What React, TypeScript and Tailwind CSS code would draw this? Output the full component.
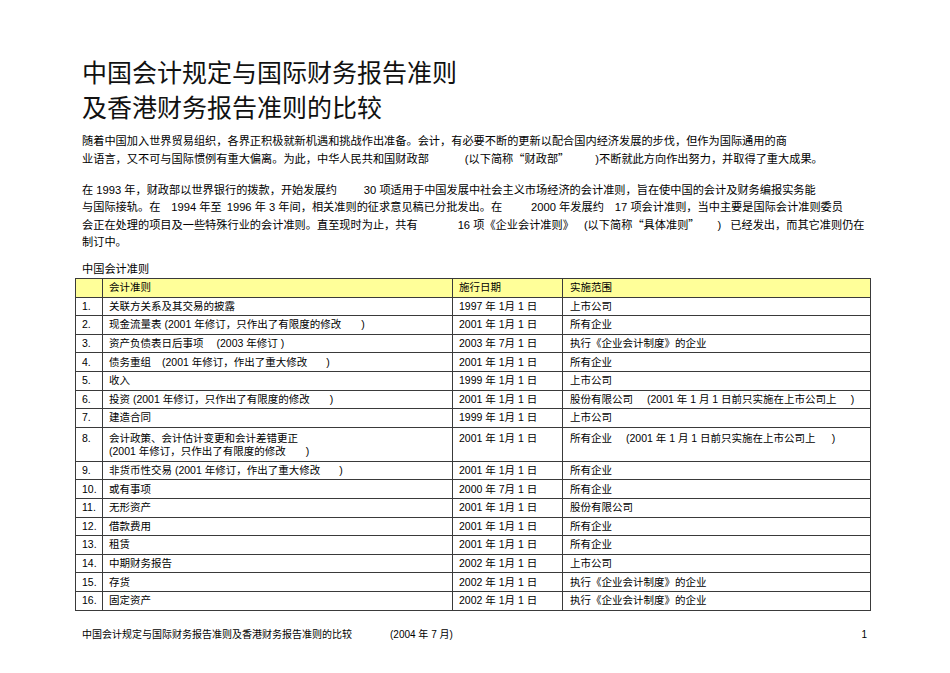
import React from "react";

const G = ({ w }: { w: string }) => <span className={`inline-block ${w}`} />;
const Q = ({ c }: { c: string }) => <span className="font-['Noto_Sans_CJK_SC',sans-serif]">{c}</span>;

type Row = { n: string; name: React.ReactNode; date: string; scope: React.ReactNode; tall?: boolean };

const rows: Row[] = [
  { n: "1.", name: "关联方关系及其交易的披露", date: "1997 年 1月 1 日", scope: "上市公司" },
  {
    n: "2.",
    name: (
      <>
        现金流量表 (2001 年修订，只作出了有限度的修改<span className="inline-block w-[20px]" />)
      </>
    ),
    date: "2001 年 1月 1 日",
    scope: "所有企业",
  },
  {
    n: "3.",
    name: (
      <>
        资产负债表日后事项<span className="inline-block w-[13px]" />(2003 年修订 )
      </>
    ),
    date: "2003 年 7月 1 日",
    scope: "执行《企业会计制度》的企业",
  },
  {
    n: "4.",
    name: (
      <>
        债务重组<span className="inline-block w-[11px]" />(2001 年修订，作出了重大修改<span className="inline-block w-[19px]" />)
      </>
    ),
    date: "2001 年 1月 1 日",
    scope: "所有企业",
  },
  { n: "5.", name: "收入", date: "1999 年 1月 1 日", scope: "上市公司" },
  {
    n: "6.",
    name: (
      <>
        投资 (2001 年修订，只作出了有限度的修改<span className="inline-block w-[20px]" />)
      </>
    ),
    date: "2001 年 1月 1 日",
    scope: (
      <>
        股份有限公司<span className="inline-block w-[14px]" />(2001 年 1 月 1 日前只实施在上市公司上<span className="inline-block w-[14px]" />)
      </>
    ),
  },
  { n: "7.", name: "建造合同", date: "1999 年 1月 1 日", scope: "上市公司" },
  {
    n: "8.",
    name: (
      <>
        会计政策、会计估计变更和会计差错更正
        <br />
        (2001 年修订，只作出了有限度的修改<span className="inline-block w-[20px]" />)
      </>
    ),
    date: "2001 年 1月 1 日",
    scope: (
      <>
        所有企业<span className="inline-block w-[14px]" />(2001 年 1 月 1 日前只实施在上市公司上<span className="inline-block w-[16px]" />)
      </>
    ),
    tall: true,
  },
  {
    n: "9.",
    name: (
      <>
        非货币性交易 (2001 年修订，作出了重大修改<span className="inline-block w-[19px]" />)
      </>
    ),
    date: "2001 年 1月 1 日",
    scope: "所有企业",
  },
  { n: "10.", name: "或有事项", date: "2000 年 7月 1 日", scope: "所有企业" },
  { n: "11.", name: "无形资产", date: "2001 年 1月 1 日", scope: "股份有限公司" },
  { n: "12.", name: "借款费用", date: "2001 年 1月 1 日", scope: "所有企业" },
  { n: "13.", name: "租赁", date: "2001 年 1月 1 日", scope: "所有企业" },
  { n: "14.", name: "中期财务报告", date: "2002 年 1月 1 日", scope: "上市公司" },
  { n: "15.", name: "存货", date: "2002 年 1月 1 日", scope: "执行《企业会计制度》的企业" },
  { n: "16.", name: "固定资产", date: "2002 年 1月 1 日", scope: "执行《企业会计制度》的企业" },
];

export default function App() {
  return (
    <div className="w-[950px] h-[673px] bg-white text-black font-['Liberation_Sans','Noto_Sans_CJK_SC',sans-serif] overflow-hidden">
      <div className="pt-[56px] pl-[82px]">
        <h1 className="text-[25px] leading-[35px] font-normal text-[#111]">
          中国会计规定与国际财务报告准则
          <br />
          及香港财务报告准则的比较
        </h1>
      </div>

      <div className="mt-[7px] pl-[82px] text-[11.2px] leading-[17px] whitespace-nowrap">
        <div>随着中国加入世界贸易组织，各界正积极就新机遇和挑战作出准备。会计，有必要不断的更新以配合国内经济发展的步伐，但作为国际通用的商</div>
        <div>
          业语言，又不可与国际惯例有重大偏离。为此，中华人民共和国财政部<G w="w-[36px]" />(以下简称<Q c="“" />财政部<Q c="”" /><G w="w-[26px]" />)不断就此方向作出努力，并取得了重大成果。
        </div>
      </div>

      <div className="mt-[14px] pl-[82px] text-[11.2px] leading-[17px] whitespace-nowrap">
        <div>
          在 1993 年，财政部以世界银行的拨款，开始发展约<G w="w-[27px]" />30 项适用于中国发展中社会主义市场经济的会计准则，旨在使中国的会计及财务编报实务能
        </div>
        <div>
          与国际接轨。在<G w="w-[11px]" />1994 年至<G w="w-[5px]" />1996 年 3 年间，相关准则的征求意见稿已分批发出。在<G w="w-[29px]" />2000 年发展约<G w="w-[11px]" />17 项会计准则，当中主要是国际会计准则委员
        </div>
        <div>
          会正在处理的项目及一些特殊行业的会计准则。直至现时为止，共有<G w="w-[40px]" />16 项《企业会计准则》<G w="w-[10px]" />(以下简称<Q c="“" />具体准则<Q c="”" /><G w="w-[18px]" />)<G w="w-[9px]" />已经发出，而其它准则仍在
        </div>
        <div>制订中。</div>
      </div>

      <div className="mt-[10px] pl-[82px] text-[11.2px] leading-[17px]">中国会计准则</div>

      <div className="pl-[75px]">
        <table className="w-[795px] table-fixed border-collapse border border-[#3a3a3a] text-[10.5px] leading-[13px]">
          <colgroup>
            <col className="w-[27px]" />
            <col className="w-[350px]" />
            <col className="w-[110px]" />
            <col className="w-[308px]" />
          </colgroup>
          <thead>
            <tr className="h-[18.6px] bg-[#ffff99]">
              <th className="border border-[#3a3a3a] p-0" />
              <th className="border border-[#3a3a3a] px-[6px] py-0 text-left font-normal">会计准则</th>
              <th className="border border-[#3a3a3a] px-[6px] py-0 text-left font-normal">施行日期</th>
              <th className="border border-[#3a3a3a] px-[7px] py-0 text-left font-normal">实施范围</th>
            </tr>
          </thead>
          <tbody>
            {rows.map((r) => (
              <tr key={r.n} className={r.tall ? "h-[34px]" : "h-[18.6px]"}>
                <td className={`border border-[#3a3a3a] px-[6px] ${r.tall ? "align-top pt-[4px]" : "py-0"} whitespace-nowrap`}>{r.n}</td>
                <td className={`border border-[#3a3a3a] px-[6px] ${r.tall ? "align-top pt-[4px]" : "py-0"} whitespace-nowrap`}>{r.name}</td>
                <td className={`border border-[#3a3a3a] px-[6px] ${r.tall ? "align-top pt-[4px]" : "py-0"} whitespace-pre`}>{r.date}</td>
                <td className={`border border-[#3a3a3a] px-[7px] ${r.tall ? "align-top pt-[4px]" : "py-0"} whitespace-nowrap`}>{r.scope}</td>
              </tr>
            ))}
          </tbody>
        </table>
      </div>

      <div className="mt-[17px] pl-[82px] pr-[83px] flex text-[10px] leading-[14px] whitespace-nowrap">
        <span>中国会计规定与国际财务报告准则及香港财务报告准则的比较</span>
        <G w="w-[38px]" />
        <span>(2004 年 7 月)</span>
        <span className="ml-auto">1</span>
      </div>
    </div>
  );
}
